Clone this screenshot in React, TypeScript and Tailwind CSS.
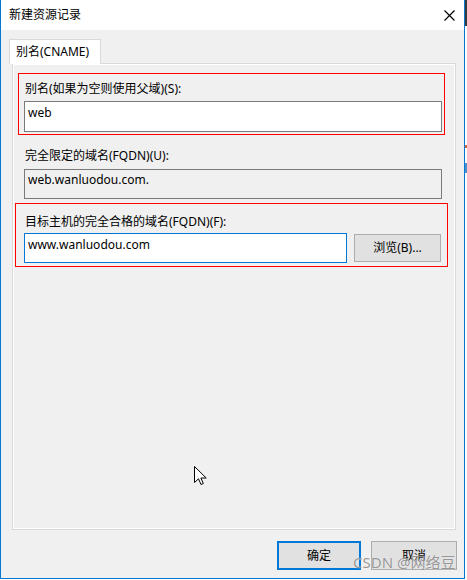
import React from "react";

const font = "font-['Noto_Sans','Noto_Sans_CJK_SC',sans-serif]";

function CloseIcon() {
  return (
    <svg width="11" height="11" viewBox="0 0 11 11" fill="none" stroke="#000" strokeWidth="1.2">
      <path d="M0.5 0.5L10.5 10.5M10.5 0.5L0.5 10.5" />
    </svg>
  );
}

function Cursor() {
  return (
    <svg width="13" height="20" viewBox="0 0 13 20" className="absolute left-[194px] top-[466px]">
      <path
        d="M0.5 0.5V16.5L4.5 12.8L7 18.5L9.3 17.5L6.9 12H12.2Z"
        fill="#fff"
        stroke="#000"
        strokeWidth="1"
        strokeLinejoin="miter"
      />
    </svg>
  );
}

export default function App() {
  return (
    <div className={`relative flex w-[467px] h-[580px] bg-white text-[12px] text-black ${font}`}>
      <div className="flex flex-col w-[465px] h-[579px] border-x border-b border-[#0078d7]">
        {/* title bar */}
        <div className="flex items-center h-[30px] bg-white pl-[8px] pr-[9px]">
          <span className="leading-[16px]">新建资源记录</span>
          <span className="ml-auto flex items-center">
            <CloseIcon />
          </span>
        </div>

        <div className="flex flex-col flex-1 bg-[#f0f0f0]">
          {/* tab */}
          <div className="flex mt-[9px] ml-[8px]">
            <div className="relative z-10 -mb-px flex items-center w-[92px] h-[25px] pl-[6px] pb-[1px] bg-white border-x border-t border-[#d9d9d9]">
              <span className="leading-[16px]">别名(CNAME)</span>
            </div>
          </div>

          {/* tab panel */}
          <div className="ml-[11px] w-[444px] h-[467px] border border-[#d9d9d9]">
            <div className="flex flex-col h-full border border-white bg-[#f0f0f0]">
              {/* alias */}
              <div className="flex flex-col ml-[4px] mt-[8px] w-[427px] h-[62px] border border-[#ff0000] pl-[5px] pt-[7px]">
                <span className="pl-[1px] leading-[16px]">别名(如果为空则使用父域)(S):</span>
                <div className="mt-[4px] w-[418px] h-[31px] border border-[#7a7a7a] bg-white pl-[3px] pt-[2px]">
                  <span className="leading-[16px]">web</span>
                </div>
              </div>

              {/* fqdn */}
              <span className="ml-[11px] mt-[13px] leading-[16px]">完全限定的域名(FQDN)(U):</span>
              <div className="ml-[10px] mt-[5px] w-[418px] h-[30px] border border-[#7a7a7a] pl-[3px] pt-[1px]">
                <span className="leading-[16px]">web.wanluodou.com.</span>
              </div>

              {/* target */}
              <div className="flex flex-col ml-[1px] mt-[4px] w-[433px] h-[64px] border border-[#ff0000] pl-[8px] pt-[10px]">
                <span className="pl-[1px] leading-[16px]">目标主机的完全合格的域名(FQDN)(F):</span>
                <div className="flex items-center gap-[7px] mt-[3px]">
                  <div className="w-[323px] h-[30px] border border-[#0078d7] bg-white pl-[3px] pt-[2px]">
                    <span className="leading-[16px]">www.wanluodou.com</span>
                  </div>
                  <button
                    type="button"
                    className="flex items-center justify-center w-[87px] h-[28px] border border-[#adadad] bg-[#e1e1e1] leading-[16px]"
                  >
                    浏览(B)...
                  </button>
                </div>
              </div>
            </div>
          </div>

          {/* footer buttons */}
          <div className="flex justify-end gap-[10px] mt-[11px] pr-[7px]">
            <button
              type="button"
              className="flex items-center justify-center w-[84px] h-[29px] border-2 border-[#0078d7] bg-[#e1e1e1] leading-[16px]"
            >
              确定
            </button>
            <button
              type="button"
              className="flex items-center justify-center w-[86px] h-[29px] border border-[#adadad] bg-[#e1e1e1] leading-[16px]"
            >
              取消
            </button>
          </div>
        </div>
      </div>

      {/* sliver of the window behind */}
      <div className="flex flex-col w-[2px]">
        <div className="h-[26px] bg-[#3a3a3a]" />
        <div className="h-[119px]" />
        <div className="h-[3px] bg-[#c86a3c]" />
        <div className="h-[15px]" />
        <div className="h-[10px] bg-[#4a8fd0]" />
      </div>

      <Cursor />

      <span className="absolute left-[353px] top-[552px] text-[15px] leading-[20px] text-[#7c7c7c]/80 [text-shadow:0_0_1px_#fff]">
        CSDN @网络豆
      </span>
    </div>
  );
}
